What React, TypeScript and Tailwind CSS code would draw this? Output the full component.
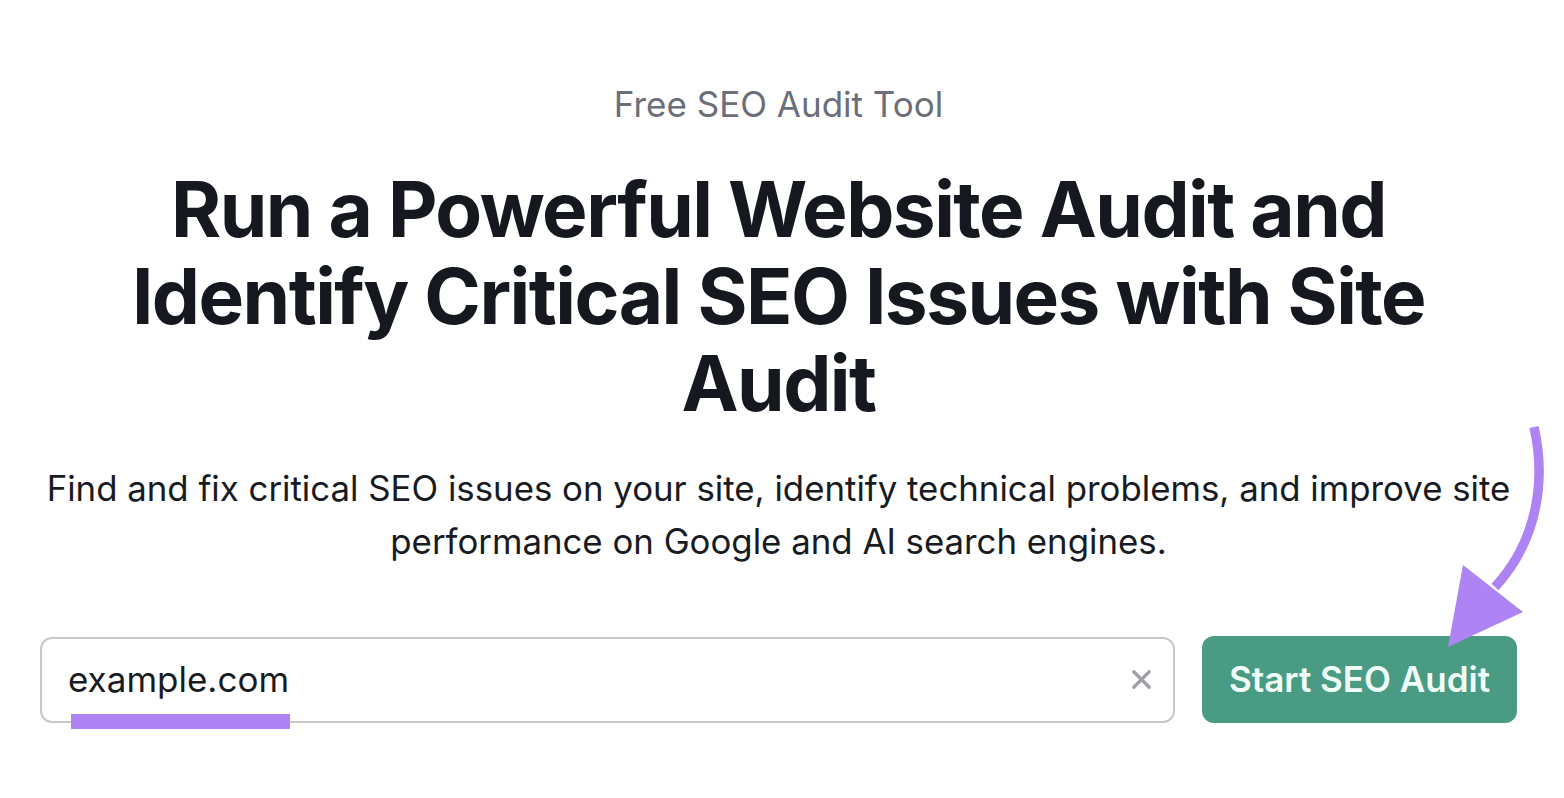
import { X } from "lucide-react";

export default function App() {
  return (
    <div className="relative min-h-screen w-full bg-white font-['Inter',sans-serif] text-[#191b23]">
      <div className="flex flex-col items-center pl-[40px] pr-[47px] pt-[80px]">
        <p className="text-[35px] leading-[48px] text-[#6c6e79]">Free SEO Audit Tool</p>

        <h1 className="mt-[38px] max-w-[1320px] text-center text-[76.5px] font-bold leading-[87px] tracking-[-0.02em] text-[#16181f]">
          Run a Powerful Website Audit and Identify Critical SEO Issues with Site Audit
        </h1>

        <p className="mt-[35px] text-center text-[34.8px] leading-[53px] text-[#191b23]">
          Find and fix critical SEO issues on your site, identify technical problems, and improve site
          <br />
          performance on Google and AI search engines.
        </p>

        <div className="mt-[68px] flex w-full items-center gap-[27px]">
          <div className="relative flex h-[86px] flex-1 items-center rounded-[12px] border-2 border-[#c8c8cc] pl-[26px] pr-[16px]">
            <span className="flex-1 text-[35px] text-[#191b23]">example.com</span>
            <X size={31} strokeWidth={2.5} className="text-[#a0a1a8]" />
            <div className="absolute left-[29px] top-[75px] h-[15px] w-[219px] bg-[#ae84f5]" />
          </div>
          <button className="h-[87px] w-[315px] rounded-[12px] bg-[#4a9b83] text-[35px] font-semibold text-[#f2fff9]">
            Start SEO Audit
          </button>
        </div>
      </div>

      {/* annotation arrow */}
      <svg className="pointer-events-none absolute left-0 top-0" width="1564" height="798" viewBox="0 0 1564 798">
        <path d="M1534 427 C1546 480 1538 540 1495 587" fill="none" stroke="#ae84f5" strokeWidth="9.5" />
        <polygon points="1463,565 1523,612 1448,647" fill="#ae84f5" />
      </svg>
    </div>
  );
}
